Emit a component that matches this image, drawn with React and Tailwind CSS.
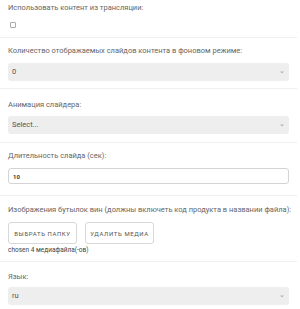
const font = { fontFamily: 'Roboto, "Liberation Sans", sans-serif' };

function Caret() {
    return (
        <svg width="4" height="3" viewBox="0 0 4 3" className="shrink-0">
            <path d="M0 0.5h4L2 2.5z" fill="#b4b4b4" />
        </svg>
    );
}

function Select({ value }) {
    return (
        <div className="mx-2 h-[18px] rounded-[3px] bg-[#eeeeee] flex items-center justify-between pl-1 pr-[5px]">
            <span className="text-[7.5px] text-[#555]">{value}</span>
            <Caret />
        </div>
    );
}

function Label({ children }) {
    return <p className="px-2 whitespace-nowrap text-[7.5px] leading-[11px] text-[#666]">{children}</p>;
}

export default function App() {
    return (
        <div className="w-[300px] h-[309px] bg-white overflow-hidden" style={font}>
            <div className="w-[297px]">
                {/* Broadcast content */}
                <section className="pt-[2px] pb-[9px] border-b border-[#efefef]">
                    <Label>Использовать контент из трансляции:</Label>
                    <div className="px-[10px] mt-[9px]">
                        <div className="w-[6px] h-[6px] border border-[#aaa] rounded-[1px]" />
                    </div>
                </section>

                {/* Slide count */}
                <section className="pt-[7px] pb-[7px] border-b border-[#efefef]">
                    <Label>Количество отображаемых слайдов контента в фоновом режиме:</Label>
                    <div className="mt-[7px]">
                        <Select value="0" />
                    </div>
                </section>

                {/* Animation */}
                <section className="pt-[10px] pb-[8px] border-b border-[#efefef]">
                    <Label>Анимация слайдера:</Label>
                    <div className="mt-[6px]">
                        <Select value="Select..." />
                    </div>
                </section>

                {/* Duration */}
                <section className="pt-[7px] pb-[11px] border-b border-[#efefef]">
                    <Label>Длительность слайда (сек):</Label>
                    <div className="mt-[7px] mx-2 h-[16px] rounded-[3px] border border-[#d4d4d4] flex items-center px-1">
                        <span className="text-[6px] font-bold text-[#444]">10</span>
                    </div>
                </section>

                {/* Wine images */}
                <section className="pt-[8px] pb-[7px] border-b border-[#efefef]">
                    <Label>Изображения бутылок вин (должны включеть код продукта в названии файла):</Label>
                    <div className="px-2 mt-[7px] flex gap-2">
                        {['ВЫБРАТЬ ПАПКУ', 'УДАЛИТЬ МЕДИА'].map((b) => (
                            <button
                                key={b}
                                className="h-[22px] w-[69px] rounded-[3px] border border-[#d8d8d8] bg-white text-[6px] tracking-[0.6px] text-[#555] cursor-pointer"
                            >
                                {b}
                            </button>
                        ))}
                    </div>
                    <p className="px-2 mt-[2px] text-[6.5px] leading-[8px] text-[#444]">chosen 4 медиафайла(-ов)</p>
                </section>

                {/* Language */}
                <section className="pt-[9px]">
                    <Label>Язык:</Label>
                    <div className="mt-[5px]">
                        <Select value="ru" />
                    </div>
                </section>
            </div>
        </div>
    );
}
